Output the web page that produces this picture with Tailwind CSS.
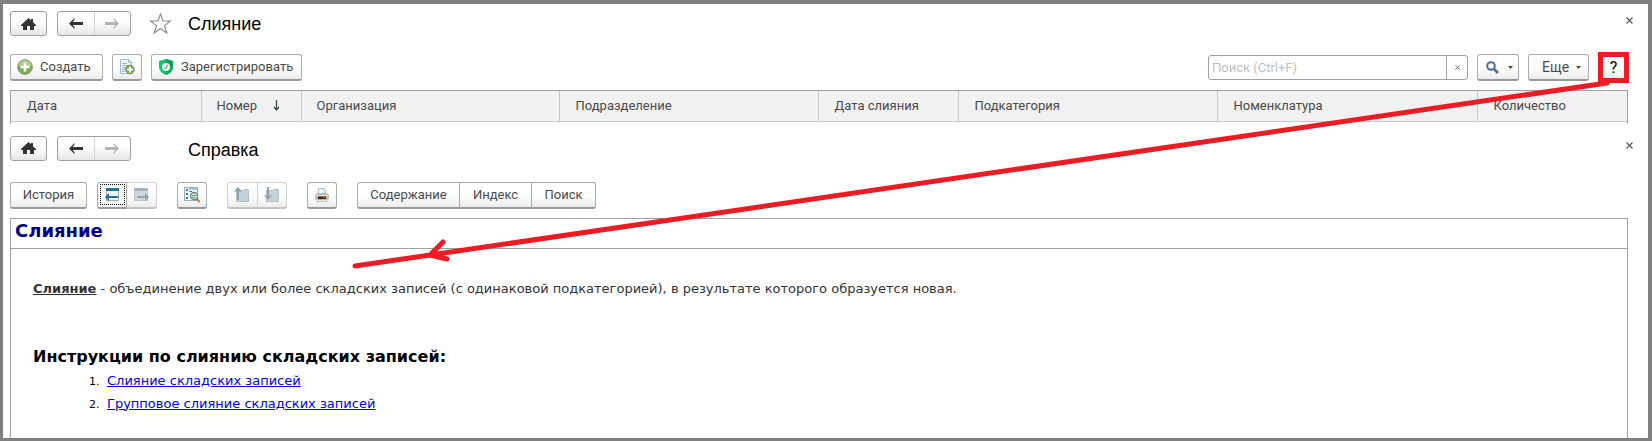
<!DOCTYPE html>
<html lang="ru">
<head>
<meta charset="utf-8">
<title>Слияние</title>
<script src="https://cdn.jsdelivr.net/npm/@tailwindcss/browser@4"></script>
</head>
<body class="relative flex min-h-screen flex-col border-t-4 border-r-4 border-b-3 border-l-3 border-[#808080] bg-white font-[Roboto,'Liberation_Sans',sans-serif] text-[13px] text-[#4a4a4a]">

<svg class="hidden">
  <symbol id="home" viewBox="0 0 15 12"><path fill="#333" d="M7.500 0 10 2.300V1h2v3.200L15 7v1h-2v4H9V8H6v4H2V8H0V7z"/></symbol>
  <symbol id="left" viewBox="0 0 14 11"><path d="M0 5.500 5.500 0v1.500L3.800 4H14v3H3.800L5.500 9.500V11z"/></symbol>
  <symbol id="right" viewBox="0 0 14 11"><path d="M14 5.500 8.500 0v1.500L10.200 4H0v3h10.200L8.500 9.500V11z"/></symbol>
  <symbol id="cross" viewBox="0 0 7 7"><path d="M.5.5l6 6M6.500.5l-6 6" fill="none" stroke="#555" stroke-width="1.100"/></symbol>
</svg>

<section>
  <header class="flex h-8 items-end pr-[15px] pl-[7px]">
    <button aria-label="Домой" class="flex h-[25px] w-[37px] items-center justify-center rounded-[3px] border border-[#a0a0a0] bg-linear-to-b from-white from-40% to-[#e6e6e6]"><svg class="h-3 w-[15px]"><use href="#home"/></svg></button>
    <div class="ml-[10px] flex h-[25px] w-[74px] rounded-[3px] border border-[#a0a0a0] bg-linear-to-b from-white from-40% to-[#e6e6e6]">
      <button aria-label="Назад" class="flex flex-1 items-center justify-center border-r border-[#d4d4d4]"><svg class="h-[11px] w-[14px] fill-[#333]"><use href="#left"/></svg></button>
      <button aria-label="Вперед" class="flex flex-1 items-center justify-center"><svg class="h-[11px] w-[14px] fill-[#b4b4b4]"><use href="#right"/></svg></button>
    </div>
    <button aria-label="В избранное" class="ml-[18px] self-end"><svg class="h-6 w-[23px]" viewBox="0 0 23 24" fill="none" stroke="#8c8c8c" stroke-width="1.200"><path d="M11.500 2 14 9h7.500l-6 4.600 2.300 7.400-6.300-4.500L5.200 21l2.300-7.400L1.500 9H9z"/></svg></button>
    <h1 class="ml-4 font-['Liberation_Sans',sans-serif] text-lg leading-6 text-black">Слияние</h1>
    <button aria-label="Закрыть" class="mt-[13px] ml-auto self-start"><svg class="h-[7px] w-[7px]"><use href="#cross"/></svg></button>
  </header>

  <div class="mt-[18px] flex h-[27px] items-center pr-[19px] pl-[7px]">
    <button class="flex h-[27px] w-[93px] items-center rounded-[3px] border border-b-2 border-[#adadad] border-b-[#999] bg-linear-to-b from-white from-50% to-[#ececec] pl-1.5">
      <svg class="h-4 w-4" viewBox="0 0 16 16"><circle cx="8" cy="8" r="7.300" fill="#78b04c" stroke="#7d8c72"/><path d="M1.500 7a6.500 6 0 0 1 13 0q-6 2-13 0" fill="#a9cf8a"/><path d="M8 3.500v9M3.500 8h9" stroke="#fff" stroke-width="2.600"/></svg>
      <span class="ml-[7px]">Создать</span>
    </button>
    <button aria-label="Создать копированием" class="ml-[9px] flex h-[27px] w-[30px] items-center justify-center rounded-[3px] border border-b-2 border-[#adadad] border-b-[#999] bg-linear-to-b from-white from-50% to-[#ececec]">
      <svg class="h-4 w-4" viewBox="0 0 16 16"><path d="M1.500.5h8l3 3v11h-11z" fill="#f2f7fb" stroke="#a3b9cf"/><path d="M9.500.5v3h3M3 4.500h5M3 6.500h7M3 8.500h5M3 10.500h3M3 12.500h3" fill="none" stroke="#9eb7cf"/><circle cx="11" cy="10.500" r="4.300" fill="#78b04c" stroke="#74886a"/><path d="M11 7.500v6M8 10.500h6" stroke="#fff" stroke-width="1.800"/></svg>
    </button>
    <button class="ml-[9px] flex h-[27px] w-[151px] items-center rounded-[3px] border border-b-2 border-[#adadad] border-b-[#999] bg-linear-to-b from-white from-50% to-[#ececec] pl-[7px]">
      <svg class="h-4 w-[14px]" viewBox="0 0 14 16"><path d="M7 0 14 2v6q0 5-7 8Q0 13 0 8V2z" fill="#0cca6c"/><path d="M7 0 14 2v6q0 5-7 8z" fill="#08a85a"/><circle cx="7" cy="8" r="4" fill="#f4faf7"/><path d="m5.500 8.500 1 1L9 6" fill="none" stroke="#7ea3b5" stroke-width="1.300"/></svg>
      <span class="ml-2">Зарегистрировать</span>
    </button>
    <div class="ml-auto flex h-[25px] w-[260px] rounded-[3px] border border-[#a0a0a0]">
      <input type="text" aria-label="Поиск" placeholder="Поиск (Ctrl+F)" class="min-w-0 flex-1 pl-[3px] text-[13px] outline-none placeholder:text-[#c0c0c0]">
      <button aria-label="Очистить" class="flex w-[21px] items-center justify-center border-l border-[#a0a0a0]"><svg class="h-[5px] w-[5px]"><use href="#cross"/></svg></button>
    </div>
    <button aria-label="Найти" class="ml-[9px] flex h-[27px] w-[42px] items-center rounded-[3px] border border-b-2 border-[#adadad] border-b-[#999] bg-linear-to-b from-white from-50% to-[#ececec] pl-2">
      <svg class="h-[13px] w-[13px]" viewBox="0 0 13 13" fill="none" stroke="#4b6f97"><circle cx="5" cy="5" r="3.800" stroke-width="2"/><path d="m8 8 4 4" stroke-width="2.600"/></svg>
      <svg class="ml-[9px] h-[3px] w-[5px]" viewBox="0 0 5 3"><path d="M0 0h5L2.500 3z" fill="#444"/></svg>
    </button>
    <button class="ml-[9px] flex h-[27px] w-[61px] items-center rounded-[3px] border border-b-2 border-[#adadad] border-b-[#999] bg-linear-to-b from-white from-50% to-[#ececec] pl-[13px]">
      <span class="text-sm">Еще</span>
      <svg class="ml-[7px] h-[3px] w-[5px]" viewBox="0 0 5 3"><path d="M0 0h5L2.500 3z" fill="#444"/></svg>
    </button>
    <button aria-label="Справка" class="-my-1 ml-[9px] h-[31px] w-[31px] border-5 border-[#ed1c24] bg-linear-to-b from-white from-50% to-[#ececec] text-base leading-5 text-black">?</button>
  </div>

  <div class="mt-[9px] mr-5 ml-[7px] border-x border-t border-[#a0a0a0] pb-0.5">
    <table class="w-full table-fixed border-collapse text-left">
      <colgroup><col class="w-[190px]"><col class="w-[100px]"><col class="w-[258px]"><col class="w-[259px]"><col class="w-[140px]"><col class="w-[259px]"><col class="w-[260px]"><col></colgroup>
      <thead>
        <tr class="h-[30px] bg-[#f1f1f1]">
          <th class="border-r border-b border-[#c8c8c8] pl-4 font-normal">Дата</th>
          <th class="border-r border-b border-[#c8c8c8] pl-[15px] font-normal"><span class="flex items-center">Номер<svg class="ml-4 h-[11px] w-[7px]" viewBox="0 0 7 11" fill="none" stroke="#444"><path d="M3.500 0v10M1 7l2.500 3L6 7" stroke-width="1.300"/></svg></span></th>
          <th class="border-r border-b border-[#c8c8c8] pl-[15px] font-normal">Организация</th>
          <th class="border-r border-b border-[#c8c8c8] pl-4 font-normal">Подразделение</th>
          <th class="border-r border-b border-[#c8c8c8] pl-4 font-normal">Дата слияния</th>
          <th class="border-r border-b border-[#c8c8c8] pl-4 font-normal">Подкатегория</th>
          <th class="border-r border-b border-[#c8c8c8] pl-4 font-normal">Номенклатура</th>
          <th class="border-b border-[#c8c8c8] pl-4 font-normal">Количество</th>
        </tr>
      </thead>
    </table>
  </div>
</section>

<section class="mt-3 flex flex-1 flex-col">
  <header class="flex h-[25px] pr-[15px] pl-[7px]">
    <button aria-label="Домой" class="flex h-[25px] w-[37px] items-center justify-center rounded-[3px] border border-[#a0a0a0] bg-linear-to-b from-white from-40% to-[#e6e6e6]"><svg class="h-3 w-[15px]"><use href="#home"/></svg></button>
    <div class="ml-[10px] flex h-[25px] w-[74px] rounded-[3px] border border-[#a0a0a0] bg-linear-to-b from-white from-40% to-[#e6e6e6]">
      <button aria-label="Назад" class="flex flex-1 items-center justify-center border-r border-[#d4d4d4]"><svg class="h-[11px] w-[14px] fill-[#333]"><use href="#left"/></svg></button>
      <button aria-label="Вперед" class="flex flex-1 items-center justify-center"><svg class="h-[11px] w-[14px] fill-[#b4b4b4]"><use href="#right"/></svg></button>
    </div>
    <h1 class="ml-[57px] font-['Liberation_Sans',sans-serif] text-lg leading-7 text-black">Справка</h1>
    <button aria-label="Закрыть" class="mt-1.5 ml-auto self-start"><svg class="h-[7px] w-[7px]"><use href="#cross"/></svg></button>
  </header>

  <div class="mt-[21px] flex h-[27px] pl-[7px]">
    <button class="w-[77px] rounded-[3px] border border-b-2 border-[#adadad] border-b-[#999] bg-linear-to-b from-white from-50% to-[#ececec]">История</button>
    <div class="ml-[10px] flex w-[60px]">
      <button aria-label="Предыдущая страница" class="flex w-[30px] items-center justify-center rounded-l-[3px] border border-b-2 border-[#adadad] border-b-[#999] bg-white">
        <span class="flex h-[21px] w-[25px] items-center justify-center border border-dotted border-black"><svg class="h-[14px] w-[15px]" viewBox="0 0 15 14"><path d="M1.500 1.500h12v11h-12z" fill="#eef5fa" stroke="#92afc2"/><path d="M1 0h13v3H1z" fill="#2e6f9d"/><path d="M0 9l4-4v3h9v2H4v3z" fill="#2e6f9d"/></svg></span>
      </button>
      <button aria-label="Следующая страница" class="flex w-[30px] items-center justify-center rounded-r-[3px] border border-b-2 border-l-0 border-[#d2d2d2] border-b-[#c4c4c4] bg-linear-to-b from-white from-50% to-[#ececec]"><svg class="h-[14px] w-[15px]" viewBox="0 0 15 14"><path d="M.5 1.500h13v11H.5z" fill="#d0d7db" stroke="#bdc8ce"/><path d="M0 0h14v3H0z" fill="#a3b4bf"/><path d="M15 9l-4-4v3H3v2h8v3z" fill="#91a6b3"/></svg></button>
    </div>
    <button aria-label="Найти в содержании" class="ml-5 flex w-[30px] items-center justify-center rounded-[3px] border border-b-2 border-[#adadad] border-b-[#999] bg-linear-to-b from-white from-50% to-[#ececec]"><svg class="h-4 w-4" viewBox="0 0 16 16"><path d="M.5.500h13v13H.5z" fill="#f2f7fa" stroke="#92b1c5"/><path d="M5 1h8v2H5z" fill="#a9c6d9"/><path d="M2 2h2v2H2zM5 4h3v1H5zM2 6h2v2H2zM2 10h2v2H2z" fill="#3e7da6"/><circle cx="10" cy="9" r="3.500" fill="#cde8dc" stroke="#6b8580" stroke-width="1.300"/><path d="M8 8.500h4M8 10.500h3" stroke="#5aa391"/><path d="m12.500 11.500 3 3.500" stroke="#b57d3e" stroke-width="2"/></svg></button>
    <div class="ml-5 flex w-[60px] rounded-[3px] border border-b-2 border-[#d2d2d2] border-b-[#c4c4c4] bg-linear-to-b from-white from-50% to-[#ececec]">
      <button aria-label="Вверх" class="flex flex-1 items-center justify-center border-r border-[#d2d2d2]"><svg class="h-4 w-4" viewBox="0 0 16 16"><path d="M2.500 3.500h6l1-1h5v12h-12z" fill="#c6d2da" stroke="#b3c1ca"/><path d="M4 0 0 4.500h3V13h2V4.500h3z" fill="#8ea3b0"/></svg></button>
      <button aria-label="Вниз" class="flex flex-1 items-center justify-center"><svg class="h-4 w-4" viewBox="0 0 16 16"><path d="M2.500 3.500h6l1-1h5v12h-12z" fill="#c6d2da" stroke="#b3c1ca"/><path d="M4 13 0 8.500h3V0h2v8.500h3z" fill="#8ea3b0"/></svg></button>
    </div>
    <button aria-label="Печать" class="ml-5 flex w-[30px] items-center justify-center rounded-[3px] border border-b-2 border-[#adadad] border-b-[#999] bg-linear-to-b from-white from-50% to-[#ececec]"><svg class="h-[14px] w-[14px]" viewBox="0 0 14 14"><path d="M2 5h10l2 2v4l-2 1H2l-2-1V7z" fill="#c9b8ab"/><path d="M3.500.5h6l1.500 5H3z" fill="#eaf4fa" stroke="#a9bfce"/><path d="M1 7.500h12" stroke="#e9e0d8"/><path d="M3 8.500h8v2.500H3z" fill="#3b2b28"/><path d="M8 9h2v1H8z" fill="#e34b31"/><path d="M3 11.500h8l1 2H2z" fill="#f1eee9" stroke="#aaa" stroke-width=".6"/></svg></button>
    <div class="ml-5 flex w-[239px] rounded-[3px] border border-b-2 border-[#adadad] border-b-[#999] bg-linear-to-b from-white from-50% to-[#ececec]">
      <button class="w-[102px] border-r border-[#adadad]">Содержание</button>
      <button class="w-[72px] border-r border-[#adadad]">Индекс</button>
      <button class="flex-1">Поиск</button>
    </div>
  </div>

  <article class="mt-[9px] mr-5 ml-[7px] flex-1 border-x border-t border-[#a0a0a0] font-['DejaVu_Sans',sans-serif]">
    <h2 class="h-[30px] border-b border-[#a0a0a0] pl-1 text-lg leading-6 font-bold text-[#00008b]">Слияние</h2>
    <div class="pt-[30px] pl-[22px]">
      <p class="leading-5 text-[#333]"><b class="underline">Слияние</b> - объединение двух или более складских записей (с одинаковой подкатегорией), в результате которого образуется новая.</p>
      <h3 class="mt-12 text-base leading-5 font-bold text-black">Инструкции по слиянию складских записей:</h3>
      <ol class="mt-[3px] list-decimal pl-[70px] text-[11px] leading-[22px] text-black">
        <li class="pl-1"><a href="#merge" class="text-[13px] text-[#0000ee] underline">Слияние складских записей</a></li>
        <li class="pl-1"><a href="#group-merge" class="text-[13px] text-[#0000ee] underline">Групповое слияние складских записей</a></li>
      </ol>
    </div>
  </article>
</section>

<svg class="pointer-events-none absolute -top-1 -left-[3px] h-[441px] w-screen" viewBox="0 0 1652 441" preserveAspectRatio="none" fill="none" stroke="#ed1c24" stroke-width="5" stroke-linecap="round" stroke-linejoin="round"><path d="M1607 83 355 266M443 242l-13 13 17 4"/></svg>
</body>
</html>
